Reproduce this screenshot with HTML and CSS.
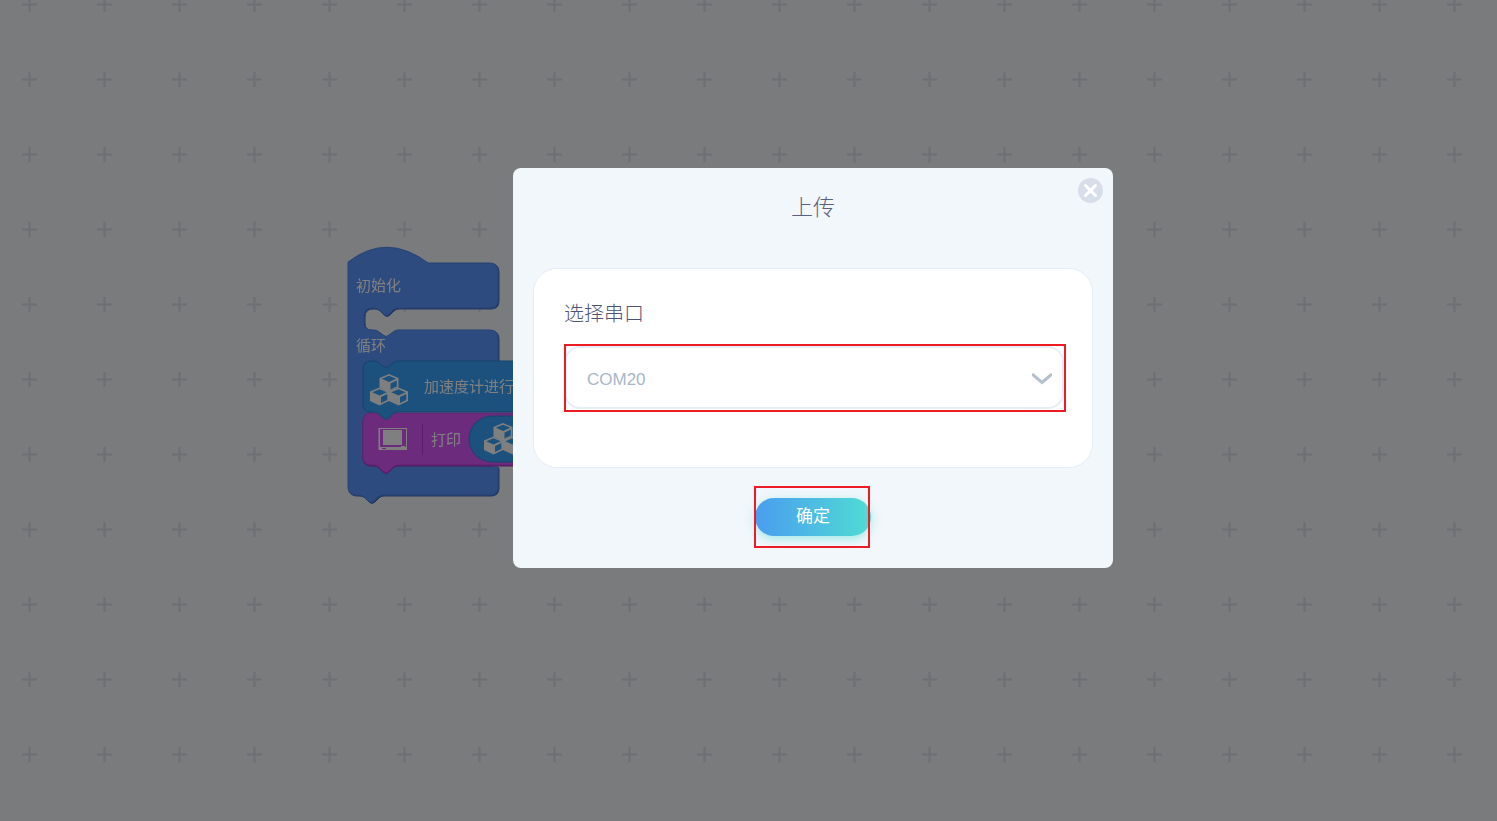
FILE: index.html
```html
<!DOCTYPE html>
<html lang="zh-CN">
<head>
    <meta charset="UTF-8">
    <meta name="viewport" content="width=device-width, initial-scale=1.0">
    <title>上传</title>
    <link rel="stylesheet" href="styles.css">
</head>
<body>
    <svg class="workspace" role="img" aria-label="积木工作区">
        <defs>
            <pattern id="crosses" x="-8" y="-33" width="75" height="75" patternUnits="userSpaceOnUse">
                <path d="M30 37.500H45M37.500 30V45" stroke="#dcdeea" stroke-width="2"/>
            </pattern>
            <g id="cube">
                <path fill="#fff" d="M9.500 0 19 4V13.500L9.500 18 0 13.500V4Z"/>
                <path class="cube-face" d="M2.300 4.700 9.500 1.700 16.700 4.700 9.500 8ZM11 9.500 17.300 6.600V12.500L11 15.600Z"/>
            </g>
            <g id="cubes">
                <use href="#cube" x="9.500" y="0"/>
                <use href="#cube" x="0" y="13.500"/>
                <use href="#cube" x="19" y="13.500"/>
            </g>
        </defs>
        <rect width="100%" height="100%" fill="url(#crosses)"/>

        <!-- 初始化 / 循环 -->
        <path class="block block-main" d="M348 262Q387 232 428 263H490Q498 263 498 271V300Q498 308 490 308H398Q395 308 393 310L389 314Q386 317 383 314L379 310Q377 308 374 308H372Q364 308 364 316V322Q364 330 372 330H374Q377 330 379 332L383 335Q386 338 389 335L393 332Q395 330 398 330H490Q498 330 498 338V370H371V460L498 467V487Q498 495 490 495H383Q380 495 378 497L374 501Q371 504 368 501L364 497Q362 495 359 495H356Q348 495 348 487Z"/>
        <text class="block-text" x="356" y="291">初始化</text>
        <text class="block-text" x="356" y="351">循环</text>

        <!-- 打印 -->
        <path class="block block-print" d="M371 413H740V465H398Q395 465 393 467L389 471Q386 474 383 471L379 467Q377 465 374 465H371Q363 465 363 457V421Q363 413 371 413Z"/>
        <path d="M422.500 424V455" stroke="#b73bd7"/>
        <text class="block-text" x="431" y="445">打印</text>
        <rect class="block block-sensor" x="469" y="416" width="260" height="46" rx="23"/>
        <use href="#cubes" x="484" y="423"/>
        <path fill="#fff" fill-rule="evenodd" d="M378.500 428H407V450H378.500ZM380 429V447H406V429ZM382 448V449H386V448Z"/>
        <path fill="#fff" d="M383 430H402V445H383ZM401 446H405V447H401Z"/>

        <!-- 加速度计 -->
        <path class="block block-sensor" d="M371 361H374Q377 361 379 363L383 366Q386 369 389 366L393 363Q395 361 398 361H740V412H398Q395 412 393 414L389 418Q386 421 383 418L379 414Q377 412 374 412H371Q363 412 363 404V369Q363 361 371 361Z"/>
        <use href="#cubes" x="370" y="374"/>
        <text class="block-text" x="424" y="392">加速度计进行初始化</text>
    </svg>

    <div class="overlay">
        <form class="dialog" role="dialog" aria-labelledby="dialogTitle">
            <button type="button" class="close" aria-label="关闭">
                <svg viewBox="0 0 25 25"><path d="M7.500 7.500 17.500 17.500M17.500 7.500 7.500 17.500" fill="none" stroke="#fff" stroke-width="3" stroke-linecap="round"/></svg>
            </button>
            <h1 class="title" id="dialogTitle">上传</h1>
            <div class="panel">
                <label for="port">选择串口</label>
                <div class="marked select-box">
                    <select id="port">
                        <option>COM20</option>
                    </select>
                    <svg class="arrow" viewBox="0 0 20 12"><path d="M0 1 10 9.500 20 1" fill="none" stroke="#b4c0ce" stroke-width="3"/></svg>
                </div>
            </div>
            <div class="marked confirm-box">
                <button type="button" class="confirm">确定</button>
            </div>
        </form>
    </div>
</body>
</html>
```
FILE: styles.css
```css
* {
    box-sizing: border-box;
}
body {
    margin: 0;
    min-height: 100vh;
    background: #f4f6f9;
    font-family: "Liberation Sans", "Noto Sans CJK SC", sans-serif;
    overflow: hidden;
}
.workspace {
    position: fixed;
    inset: 0;
    width: 100%;
    height: 100%;
}
.block {
    stroke-width: 1;
}
.block-main {
    fill: #5a96ff;
    stroke: #4f86e8;
    filter: drop-shadow(1px 1px 0 #446fc4);
}
.block-sensor {
    fill: #38a2fc;
    stroke: #2c86d4;
}
.block-print {
    fill: #da56fc;
    stroke: #c248e2;
    filter: drop-shadow(0 1px 0 #a834c6);
}
.cube-face {
    fill: #38a2fc;
}
.block-text {
    fill: #fff;
    font-size: 15px;
}
.overlay {
    position: fixed;
    inset: 0;
    display: flex;
    justify-content: center;
    align-items: flex-start;
    padding: 168px 0 0 129px;
    background: rgba(0, 0, 0, 0.5);
}
.dialog {
    position: relative;
    width: 600px;
    padding: 20px;
    border-radius: 8px;
    background: #f1f7fb;
}
.close {
    position: absolute;
    top: 10px;
    right: 10px;
    width: 25px;
    height: 25px;
    padding: 0;
    border: none;
    border-radius: 50%;
    background: #d7deea;
    cursor: pointer;
}
.close svg {
    display: block;
}
.title {
    margin: 0 0 40px;
    color: #5b6080;
    font-size: 22px;
    font-weight: 300;
    line-height: 40px;
    text-align: center;
}
.panel {
    height: 200px;
    padding: 30px 28px 0 30px;
    border: 1px solid #e6edf7;
    border-radius: 24px;
    background: #fff;
}
.panel label {
    display: block;
    margin-bottom: 17px;
    color: #4d5475;
    font-size: 20px;
    font-weight: 300;
    line-height: 30px;
}
/* red frame round the control to click */
.marked {
    position: relative;
}
.marked::after {
    content: "";
    position: absolute;
    border: 2px solid #ed1c24;
    pointer-events: none;
}
.select-box::after {
    inset: -2px -2px -3px 0;
}
.panel select {
    display: block;
    width: 100%;
    height: 63px;
    padding: 3px 20px 0 21px;
    border: 2px solid #e6edf7;
    border-radius: 16px;
    background: #fff;
    color: #a9b7c6;
    font-family: inherit;
    font-size: 17px;
    appearance: none;
}
.arrow {
    position: absolute;
    top: 27px;
    right: 12px;
    width: 20px;
    height: 12px;
    pointer-events: none;
}
.confirm-box {
    width: 116px;
    margin: 30px auto 12px;
}
.confirm-box::after {
    inset: -12px 1px -12px -1px;
}
.confirm {
    display: block;
    width: 100%;
    height: 38px;
    padding: 0 0 6px;
    border: none;
    border-radius: 19px;
    background: linear-gradient(90deg, #4a9df0, #50dcd4);
    box-shadow: 0 3px 10px rgba(80, 220, 212, 0.5);
    color: #fff;
    font-family: inherit;
    font-size: 17px;
    cursor: pointer;
}
```
